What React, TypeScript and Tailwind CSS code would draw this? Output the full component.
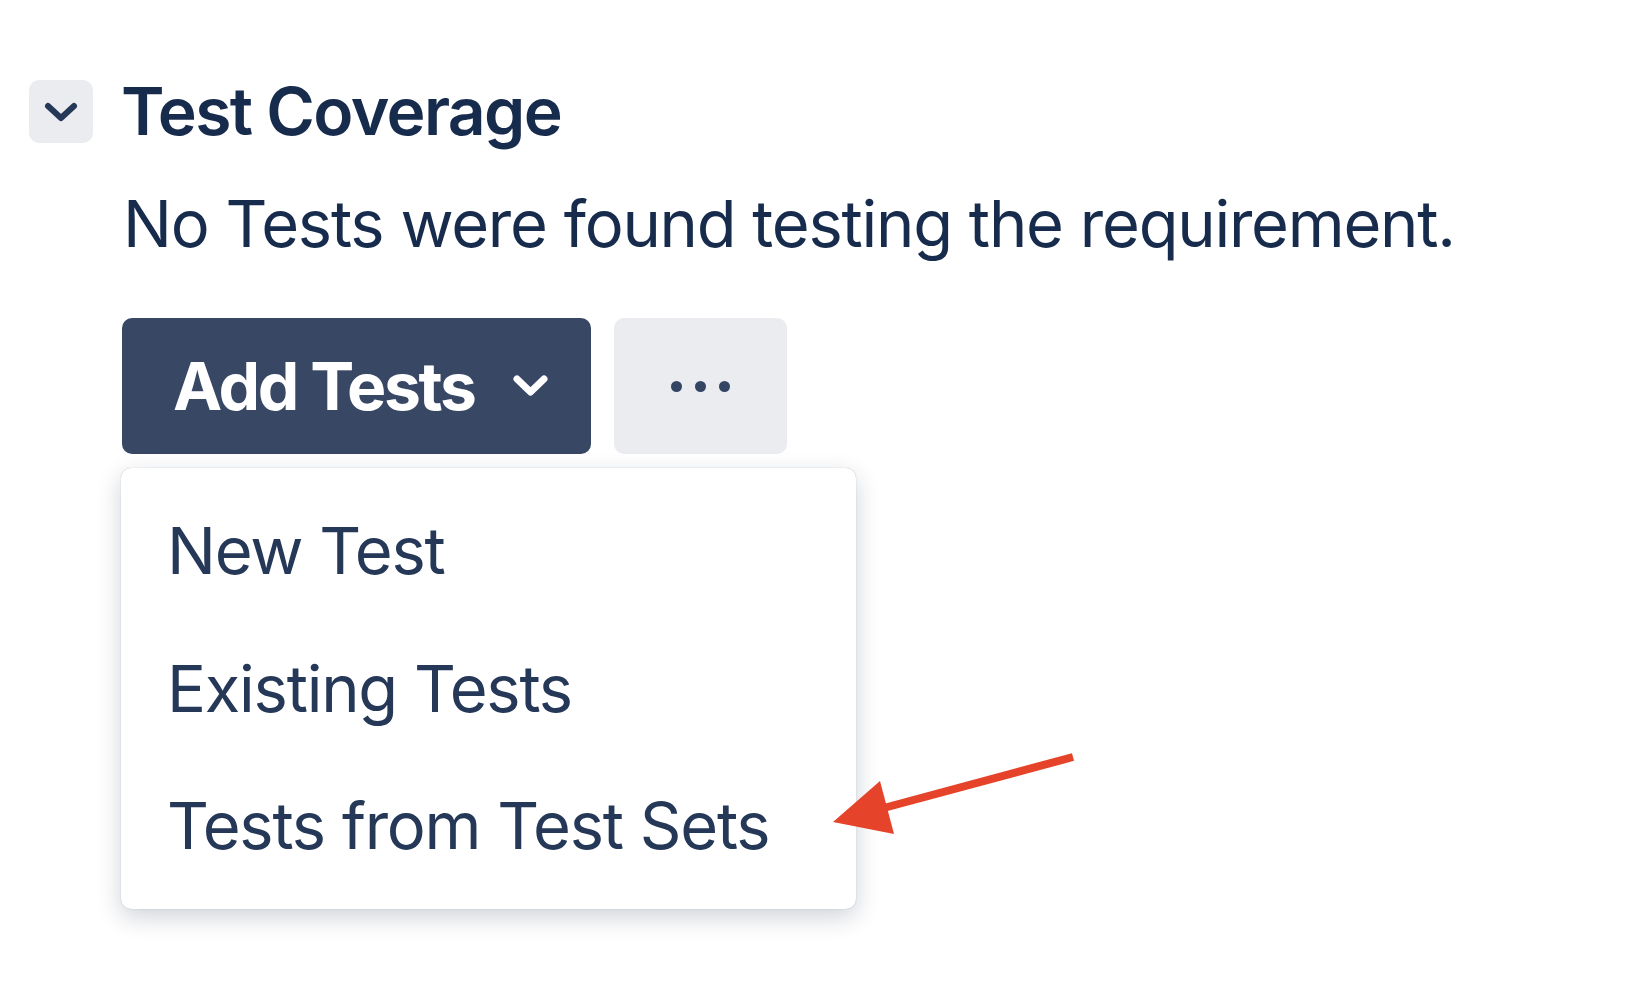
export default function App() {
  return (
    <div className="relative min-h-[990px] w-[1632px] bg-white font-['Inter',sans-serif] text-[#172b4d]">
      <div className="flex items-start gap-[30px] pl-[29px] pt-[80px]">
        <div className="flex h-[63px] w-[64px] shrink-0 items-center justify-center rounded-[10px] bg-[#ebecf0]">
          <svg width="36" height="22" viewBox="0 0 36 22">
            <path d="M5 5 L18 17 L31 5" fill="none" stroke="#253858" strokeWidth="6" strokeLinecap="round" strokeLinejoin="round" />
          </svg>
        </div>
        <div className="flex flex-col">
          <h2 className="-ml-[2px] whitespace-nowrap text-[66px] font-semibold leading-[63px] tracking-[-0.025em]">Test Coverage</h2>
          <p className="mt-[41px] whitespace-nowrap text-[65px] leading-[80px] tracking-[-0.019em]">No Tests were found testing the requirement.</p>
          <div className="-ml-[1px] mt-[54px] flex gap-[23px]">
            <button className="flex h-[136px] items-center gap-[37px] rounded-[10px] bg-[#374764] pl-[51px] pr-[42px] text-[66px] font-bold leading-none tracking-[-0.035em] text-white">
              <span>Add Tests</span>
              <svg width="37" height="24" viewBox="0 0 37 24">
                <path d="M5 5 L18.5 18 L32 5" fill="none" stroke="#ffffff" strokeWidth="7" strokeLinecap="round" strokeLinejoin="round" />
              </svg>
            </button>
            <button className="flex h-[136px] w-[173px] items-center justify-center gap-[13px] rounded-[10px] bg-[#ebecf0]">
              <span className="h-[11px] w-[11px] rounded-full bg-[#344563]" />
              <span className="h-[11px] w-[11px] rounded-full bg-[#344563]" />
              <span className="h-[11px] w-[11px] rounded-full bg-[#344563]" />
            </button>
          </div>
          <div className="-ml-[2px] mt-[14px] flex w-[735px] flex-col rounded-[10px] bg-white py-[14px] shadow-[0_8px_24px_rgba(9,30,66,0.2),0_0_1px_rgba(9,30,66,0.35)]">
            {["New Test", "Existing Tests", "Tests from Test Sets"].map((t) => (
              <div key={t} className="h-[137.5px] whitespace-nowrap pl-[46px] text-[65px] leading-[137.5px] tracking-[-0.019em] text-[#253858]">
                {t}
              </div>
            ))}
          </div>
        </div>
      </div>
      <svg className="pointer-events-none absolute left-0 top-0" width="1632" height="990" viewBox="0 0 1632 990">
        <line x1="1073" y1="757" x2="880" y2="809" stroke="#e5432a" strokeWidth="8" />
        <polygon points="833,822 880,781 894,834" fill="#e5432a" />
      </svg>
    </div>
  );
}
